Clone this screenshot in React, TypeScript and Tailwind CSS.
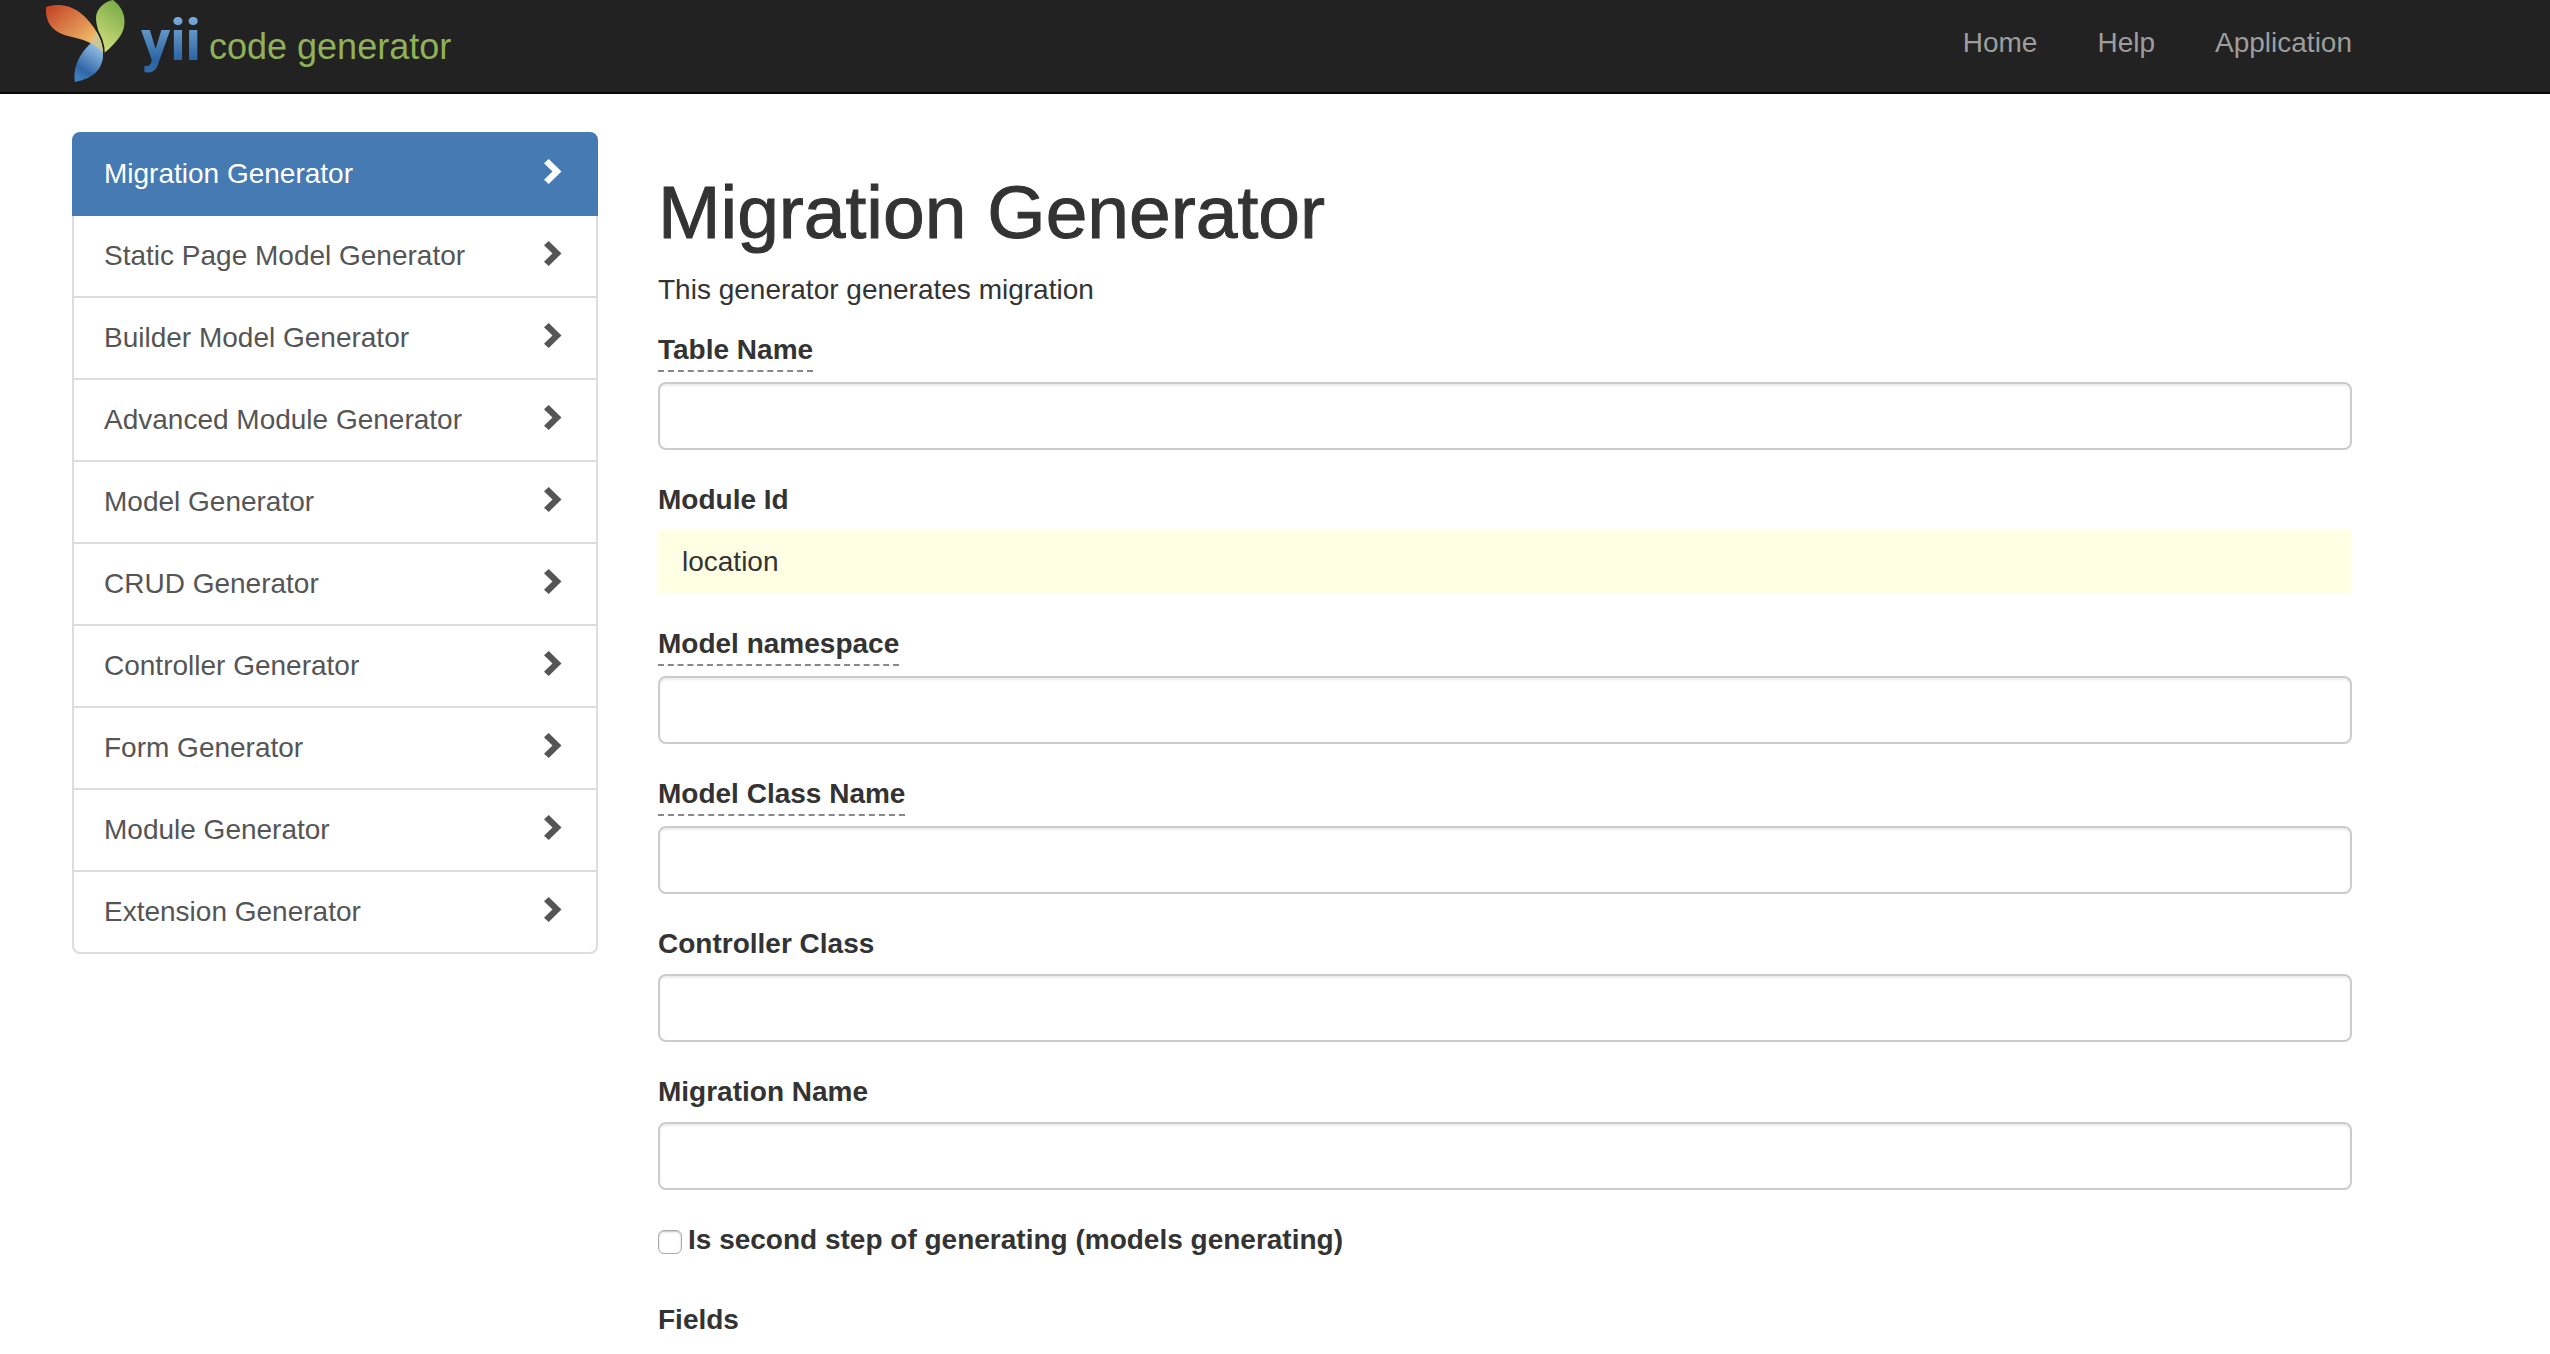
import React from "react";

const generators = [
  "Migration Generator",
  "Static Page Model Generator",
  "Builder Model Generator",
  "Advanced Module Generator",
  "Model Generator",
  "CRUD Generator",
  "Controller Generator",
  "Form Generator",
  "Module Generator",
  "Extension Generator",
];

function Logo() {
  return (
    <svg viewBox="0 0 440 92" className="h-[92px] w-[440px]" role="img" aria-label="yii code generator">
      <defs>
        <linearGradient id="orange" x1="0" y1="0" x2="1" y2="1">
          <stop offset="0" stopColor="#c23f24" />
          <stop offset="0.5" stopColor="#e08c50" />
          <stop offset="1" stopColor="#fbe27c" />
        </linearGradient>
        <linearGradient id="green" x1="0.7" y1="0" x2="0.3" y2="1">
          <stop offset="0" stopColor="#77ab47" />
          <stop offset="1" stopColor="#d5e07e" />
        </linearGradient>
        <linearGradient id="blue" x1="0.8" y1="0" x2="0.3" y2="1">
          <stop offset="0" stopColor="#9cc7ea" />
          <stop offset="0.75" stopColor="#2f66a6" />
          <stop offset="1" stopColor="#3f7fc0" />
        </linearGradient>
        <linearGradient id="yii" gradientUnits="userSpaceOnUse" x1="0" y1="12" x2="0" y2="72">
          <stop offset="0" stopColor="#83b5e0" />
          <stop offset="0.8" stopColor="#2c64a3" />
          <stop offset="1" stopColor="#3269a8" />
        </linearGradient>
      </defs>
      <path d="M16 7C32 2 46 7 57 19C67 30 73 41 73 53C63 42 52 39 38 36C23 32 15 23 16 7Z" fill="url(#orange)" />
      <path d="M83 0C93 7 98 20 92 33C88 40 81 48 74 53C74 41 66 30 66 18C66 9 75 1 83 0Z" fill="url(#green)" />
      <path d="M61 43C66 46 71 49 73 53C74 69 62 79 45 82C42 67 51 52 61 43Z" fill="url(#blue)" />
      <path d="M61 43C64 40 65 36 66 31C70 38 73 45 73 53C70 49 66 45 61 43Z" fill="#c9c996" />
      <path d="M66 29C71 36 74 44 74 53" fill="none" stroke="#222" strokeWidth="1.500" />
      <text x="111" y="60" fill="url(#yii)" fontSize="58" fontWeight="700" fontFamily="Roboto, sans-serif">
        yii
      </text>
      <text x="179" y="59" fill="#8fb158" fontSize="36" fontFamily="'Liberation Sans', Arial, sans-serif">
        code generator
      </text>
    </svg>
  );
}

function Chevron() {
  return (
    <svg viewBox="0 0 28 32" className="h-8 w-7 shrink-0" fill="currentColor" aria-hidden="true">
      <path d="M6 9.300L10.700 5L23.500 17.500L10.700 30L6 25.700L14.500 17.500Z" />
    </svg>
  );
}

function Field({ id, label, hint = false }: { id: string; label: string; hint?: boolean }) {
  return (
    <div className="mb-[30px] flex flex-col items-start">
      <label
        htmlFor={id}
        className={hint ? "mb-2.5 border-b-2 border-dashed border-[#888] font-bold" : "mb-2.5 font-bold"}
      >
        {label}
      </label>
      <input
        id={id}
        type="text"
        className="h-[68px] w-full rounded-lg border-2 border-[#ccc] bg-white px-6 shadow-[inset_0_2px_2px_rgba(0,0,0,0.075)] outline-none"
      />
    </div>
  );
}

export default function App() {
  return (
    <div className="min-h-screen bg-white font-['Liberation_Sans',Arial,sans-serif] text-[28px] leading-10 text-[#333]">
      <header className="flex items-start justify-between border-b-2 border-[#080808] bg-[#222] pr-[198px] pl-[30px]">
        <a href="#home">
          <Logo />
        </a>
        <nav className="flex gap-[60px] py-[23px] text-[#9d9d9d]">
          <a href="#home">Home</a>
          <a href="#help">Help</a>
          <a href="#application">Application</a>
        </nav>
      </header>

      <div className="flex items-start gap-[60px] pt-[38px] pr-[198px] pl-[72px]">
        <nav className="w-[526px] shrink-0 text-[#555]">
          {generators.map((name, i) => (
            <a
              key={name}
              href={"#generator-" + i}
              className={
                i === 0
                  ? "relative flex items-start justify-between rounded-t-lg border-2 border-[#467ab3] bg-[#467ab3] px-[30px] py-5 text-white"
                  : "-mt-0.5 flex items-start justify-between border-2 border-[#ddd] px-[30px] py-5 last:rounded-b-lg"
              }
            >
              {name}
              <Chevron />
            </a>
          ))}
        </nav>

        <main className="min-w-0 flex-1">
          <h1 className="mt-10 mb-[18px] text-[75px] leading-[80px] [-webkit-text-stroke:1px_#333]">Migration Generator</h1>
          <p className="mb-5">This generator generates migration</p>
          <form>
            <Field id="table-name" label="Table Name" hint />
            <div className="mb-[30px]">
              <div className="mb-2.5 font-bold">Module Id</div>
              <div className="bg-[#ffffe3] px-6 py-3">location</div>
            </div>
            <Field id="model-namespace" label="Model namespace" hint />
            <Field id="model-class" label="Model Class Name" hint />
            <Field id="controller-class" label="Controller Class" />
            <Field id="migration-name" label="Migration Name" />
            <div className="mb-10 flex items-center gap-1.5 font-bold">
              <input
                id="second-step"
                type="checkbox"
                className="mt-1 size-6 appearance-none rounded-md border border-[#aaa] bg-white shadow-[inset_0_1px_2px_rgba(0,0,0,0.25)]"
              />
              <label htmlFor="second-step">Is second step of generating (models generating)</label>
            </div>
            <div className="font-bold">Fields</div>
          </form>
        </main>
      </div>
    </div>
  );
}
